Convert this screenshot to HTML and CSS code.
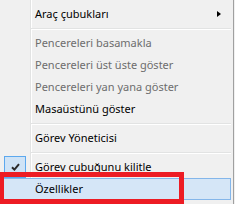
FILE: index.html
```html
<!DOCTYPE html>
<html lang="tr">
<head>
<meta charset="utf-8">
<link rel="stylesheet" href="styles.css">
</head>
<body>
<div class="menu">
  <div class="item"><span class="chk"></span><span class="label">Araç çubukları</span><span class="arrow"></span></div>
  <div class="sep"></div>
  <div class="item disabled"><span class="chk"></span><span class="label">Pencereleri basamakla</span></div>
  <div class="item disabled"><span class="chk"></span><span class="label">Pencereleri üst üste göster</span></div>
  <div class="item disabled"><span class="chk"></span><span class="label">Pencereleri yan yana göster</span></div>
  <div class="item"><span class="chk"></span><span class="label">Masaüstünü göster</span></div>
  <div class="sep"></div>
  <div class="item"><span class="chk"></span><span class="label">Görev Yöneticisi</span></div>
  <div class="sep"></div>
  <div class="item"><span class="chk on"><svg width="9" height="8" viewBox="0 0 9 8"><path d="M1 4.2 L3.4 6.6 L8 1.2" fill="none" stroke="#2b2b2b" stroke-width="2"/></svg></span><span class="label">Görev çubuğunu kilitle</span></div>
  <div class="item hover"><span class="chk"></span><span class="label">Özellikler</span></div>
  <div class="mark"></div>
</div>
</body>
</html>
```
FILE: styles.css
```css
html, body {
  margin: 0;
  padding: 0;
  background: #f0f0f0;
}
body {
  width: 235px;
  height: 204px;
  overflow: hidden;
}
.menu {
  position: relative;
  width: 233px;
  height: 204px;
  box-sizing: content-box;
  border-right: 1px solid #a0a0a0;
  padding-top: 3px;
  background:
    linear-gradient(to right, transparent 30px, #e2e3e3 30px, #e2e3e3 31px, #ffffff 31px, #ffffff 32px, transparent 32px),
    #f0f0f0;
  font-family: "Noto Sans", "Open Sans", sans-serif;
  font-size: 11px;
  color: #000;
}
.item {
  display: flex;
  align-items: center;
  height: 22px;
  margin: 0 2px 0 3px;
  box-sizing: border-box;
  position: relative;
}
.item.disabled {
  color: #6d6d6d;
}
.item.hover {
  background: #d5e6f7;
  border: 1px solid #84b6ea;
}
.chk {
  width: 22px;
  height: 22px;
  margin-left: 1px;
  box-sizing: border-box;
  flex: none;
  display: flex;
  align-items: center;
  justify-content: center;
}
.item.hover .chk {
  margin-left: 0;
}
.chk.on {
  background: #cfe3f6;
  border: 1px solid #5ca8ee;
}
.label {
  margin-left: 9px;
  white-space: nowrap;
  line-height: 22px;
}
.arrow {
  margin-left: auto;
  margin-right: 10px;
  width: 0;
  height: 0;
  border-top: 3.5px solid transparent;
  border-bottom: 3.5px solid transparent;
  border-left: 4px solid #000;
}
.sep {
  height: 7px;
  margin: 0 2px 0 31px;
  background: linear-gradient(to bottom, transparent 3px, #e2e3e3 3px, #e2e3e3 4px, #ffffff 4px, #ffffff 5px, transparent 5px);
}
.mark {
  position: absolute;
  left: -1px;
  top: 172px;
  width: 185px;
  height: 32px;
  box-sizing: border-box;
  border: 5px solid #ed1c24;
}
```
